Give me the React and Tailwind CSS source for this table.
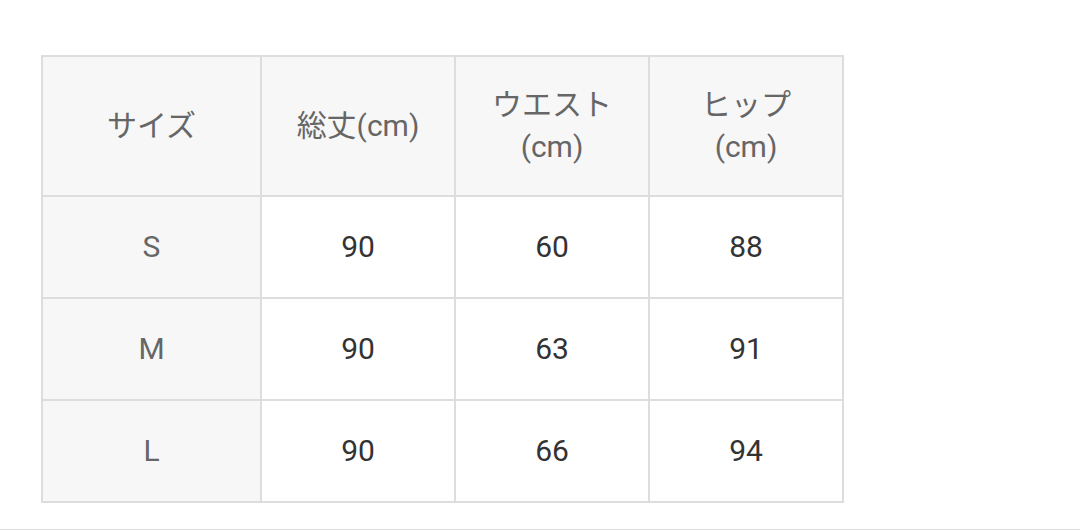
export default function App() {
  const rows = [
    { size: 'S', length: 90, waist: 60, hip: 88 },
    { size: 'M', length: 90, waist: 63, hip: 91 },
    { size: 'L', length: 90, waist: 66, hip: 94 },
  ];

  const head = 'border-2 border-[#dddddd] bg-[#f7f7f7] text-[#666666] font-normal';
  const cell = 'border-2 border-[#dddddd] text-[#333333] font-normal';

  return (
    <div
      className="w-[1080px] h-[530px] bg-white border-b border-[#dddddd] pt-[55px] pl-[41px]"
      style={{ fontFamily: 'Roboto, "Noto Sans CJK JP", sans-serif' }}
    >
      <table className="border-collapse text-center text-[30px] leading-[42px]">
        <thead>
          <tr className="h-[140px]">
            <th className={`${head} w-[219px]`}>サイズ</th>
            <th className={`${head} w-[194px]`}>総丈(cm)</th>
            <th className={`${head} w-[194px]`}>
              ウエスト
              <br />
              (cm)
            </th>
            <th className={`${head} w-[194px]`}>
              ヒップ
              <br />
              (cm)
            </th>
          </tr>
        </thead>
        <tbody>
          {rows.map((r) => (
            <tr key={r.size} className="h-[102px]">
              <td className={head}>{r.size}</td>
              <td className={cell}>{r.length}</td>
              <td className={cell}>{r.waist}</td>
              <td className={cell}>{r.hip}</td>
            </tr>
          ))}
        </tbody>
      </table>
    </div>
  );
}
